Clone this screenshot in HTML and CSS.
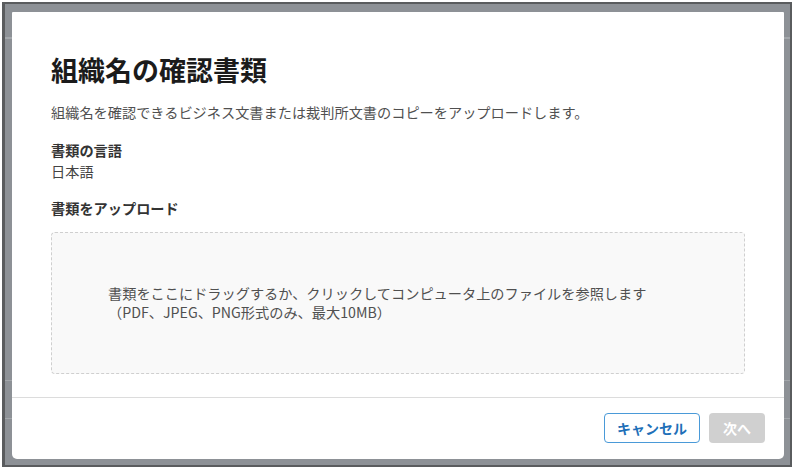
FILE: index.html
```html
<!DOCTYPE html>
<html lang="ja">
<head>
<meta charset="utf-8">
<title>組織名の確認書類</title>
<link rel="stylesheet" href="styles.css">
</head>
<body>
<div class="frame">
  <div class="modal">
    <div class="modal-body">
      <h1 class="title">組織名の確認書類</h1>
      <p class="desc">組織名を確認できるビジネス文書または裁判所文書のコピーをアップロードします。</p>
      <div class="field">
        <div class="label">書類の言語</div>
        <div class="value">日本語</div>
      </div>
      <div class="label upload-label">書類をアップロード</div>
      <div class="dropzone">
        <div class="drop-text">
          <div>書類をここにドラッグするか、クリックしてコンピュータ上のファイルを参照します</div>
          <div>（PDF、JPEG、PNG形式のみ、最大10MB）</div>
        </div>
      </div>
    </div>
    <div class="modal-footer">
      <button class="btn btn-cancel">キャンセル</button>
      <button class="btn btn-next" disabled>次へ</button>
    </div>
  </div>
</div>
</body>
</html>
```
FILE: styles.css
```css
* { box-sizing: border-box; }
html, body {
  margin: 0;
  padding: 0;
  background: #ffffff;
}
body {
  font-family: "Noto Sans CJK JP", "Noto Sans", sans-serif;
  padding: 2px;
}
.frame {
  width: 790px;
  height: 465px;
  border-style: solid;
  border-color: #5a5c5e;
  border-width: 2px 2px 2px 3px;
  background-color: #8d9196;
  background-image:
    linear-gradient(to bottom, transparent 33px, #a3a7ab 33px, #a3a7ab 35px, transparent 35px),
    linear-gradient(to bottom, transparent 376px, #a3a7ab 376px, #a3a7ab 377px, transparent 377px),
    linear-gradient(to bottom, transparent 414px, #a3a7ab 414px, #a3a7ab 415px, transparent 415px);
  padding: 8px 6px 6px 7px;
  display: flex;
}
.modal {
  flex: 1;
  background: #ffffff;
  border-radius: 1px 1px 5px 5px;
  display: flex;
  flex-direction: column;
}
.modal-body {
  padding: 40px 39px 0 39px;
  height: 385px;
  display: flex;
  flex-direction: column;
}
.title {
  margin: 0;
  font-size: 27px;
  line-height: 36px;
  font-weight: 700;
  color: #1b1b1b;
}
.desc {
  margin: 14px 0 0 0;
  font-size: 14.2px;
  line-height: 20px;
  color: #505050;
}
.field {
  margin-top: 18px;
}
.label {
  font-size: 14.2px;
  line-height: 21px;
  font-weight: 700;
  color: #333333;
}
.value {
  font-size: 14.2px;
  line-height: 21px;
  color: #444444;
}
.upload-label {
  margin-top: 16px;
  line-height: 20px;
}
.dropzone {
  margin-top: 14px;
  height: 142px;
  border: 1px dashed #cfcfcf;
  border-radius: 4px;
  background: #f9f9f9;
  display: flex;
  align-items: center;
  padding-left: 56px;
}
.drop-text {
  font-size: 14.2px;
  line-height: 19px;
  color: #505050;
}
.modal-footer {
  flex: 1;
  border-top: 1px solid #dcdcdc;
  display: flex;
  justify-content: flex-end;
  align-items: center;
  gap: 9px;
  padding: 0 19px 1px 0;
}
.btn {
  height: 30px;
  border-radius: 4px;
  font-family: inherit;
  font-size: 14px;
  font-weight: 700;
  padding: 0;
  display: flex;
  align-items: center;
  justify-content: center;
}
.btn-cancel {
  width: 96px;
  background: #ffffff;
  border: 1.5px solid #4a9ad8;
  color: #1f70b8;
}
.btn-next {
  width: 56px;
  background: #d0d0d0;
  border: none;
  color: #ffffff;
}
```
